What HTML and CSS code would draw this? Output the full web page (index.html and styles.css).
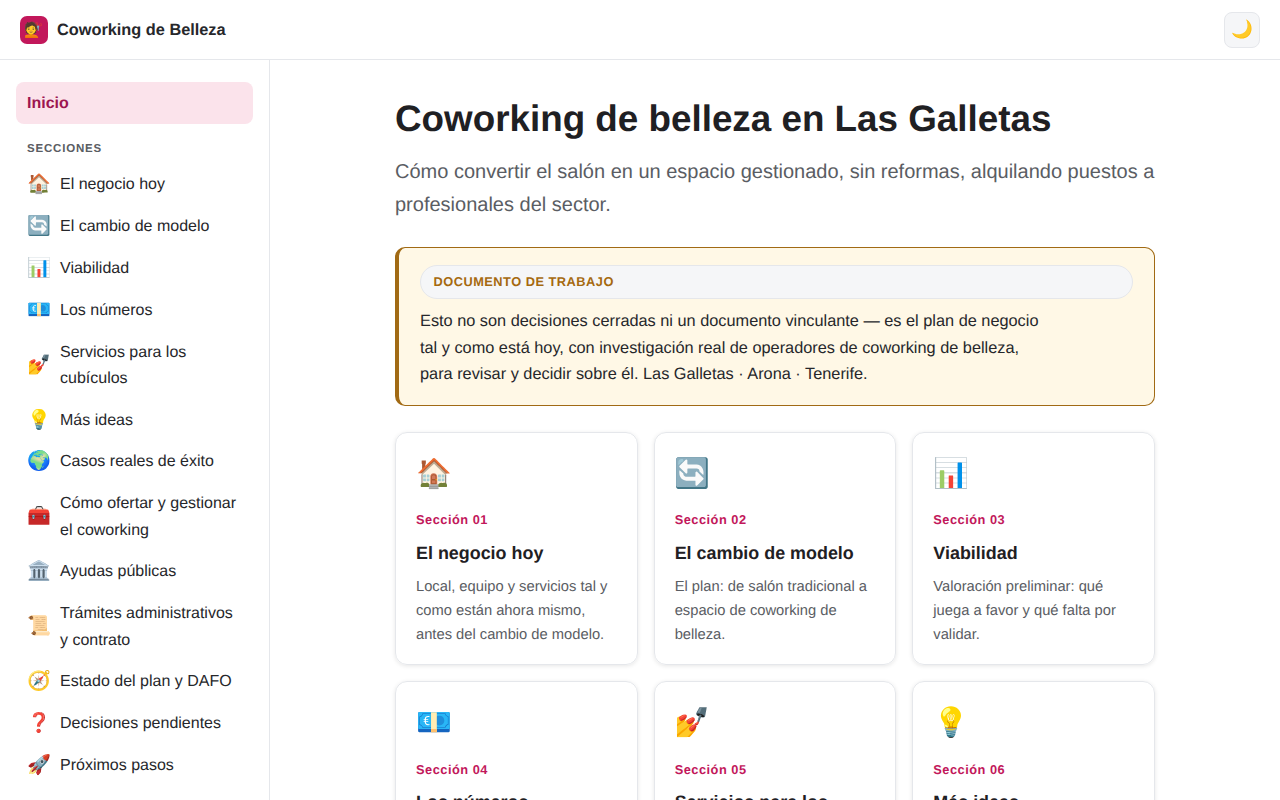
FILE: index.html
```html
<!DOCTYPE html>
<html lang="es">
<head>
    <meta charset="UTF-8">
    <meta name="viewport" content="width=device-width, initial-scale=1.0">
    <title>Coworking de Belleza</title>
    <link rel="stylesheet" href="styles.css">
</head>
<body>
    <!-- Top bar -->
    <header class="topbar">
        <div class="brand">
            <span class="brand-logo">💇</span>
            <span class="brand-name">Coworking de Belleza</span>
        </div>
        <button class="mode-toggle">🌙</button>
    </header>

    <div class="layout">
        <!-- Sidebar -->
        <nav class="sidebar">
            <a class="nav-home" href="#">Inicio</a>
            <div class="nav-label">SECCIONES</div>
            <a class="nav-item" href="#"><span class="nav-icon">🏠</span><span>El negocio hoy</span></a>
            <a class="nav-item" href="#"><span class="nav-icon">🔄</span><span>El cambio de modelo</span></a>
            <a class="nav-item" href="#"><span class="nav-icon">📊</span><span>Viabilidad</span></a>
            <a class="nav-item" href="#"><span class="nav-icon">💶</span><span>Los números</span></a>
            <a class="nav-item" href="#"><span class="nav-icon">💅</span><span>Servicios para los cubículos</span></a>
            <a class="nav-item" href="#"><span class="nav-icon">💡</span><span>Más ideas</span></a>
            <a class="nav-item" href="#"><span class="nav-icon">🌍</span><span>Casos reales de éxito</span></a>
            <a class="nav-item" href="#"><span class="nav-icon">🧰</span><span>Cómo ofertar y gestionar el coworking</span></a>
            <a class="nav-item" href="#"><span class="nav-icon">🏛️</span><span>Ayudas públicas</span></a>
            <a class="nav-item" href="#"><span class="nav-icon">📜</span><span>Trámites administrativos y contrato</span></a>
            <a class="nav-item" href="#"><span class="nav-icon">🧭</span><span>Estado del plan y DAFO</span></a>
            <a class="nav-item" href="#"><span class="nav-icon">❓</span><span>Decisiones pendientes</span></a>
            <a class="nav-item" href="#"><span class="nav-icon">🚀</span><span>Próximos pasos</span></a>
        </nav>

        <!-- Main content -->
        <main class="content">
            <h1>Coworking de belleza en Las Galletas</h1>
            <p class="lead">Cómo convertir el salón en un espacio gestionado, sin reformas, alquilando puestos a profesionales del sector.</p>

            <div class="callout">
                <div class="callout-title">DOCUMENTO DE TRABAJO</div>
                <p>Esto no son decisiones cerradas ni un documento vinculante — es el plan de negocio<br>tal y como está hoy, con investigación real de operadores de coworking de belleza,<br>para revisar y decidir sobre él. Las Galletas · Arona · Tenerife.</p>
            </div>

            <div class="cards">
                <a class="card" href="#">
                    <div class="card-icon">🏠</div>
                    <div class="card-num">Sección 01</div>
                    <h3>El negocio hoy</h3>
                    <p>Local, equipo y servicios tal y como están ahora mismo, antes del cambio de modelo.</p>
                </a>
                <a class="card" href="#">
                    <div class="card-icon">🔄</div>
                    <div class="card-num">Sección 02</div>
                    <h3>El cambio de modelo</h3>
                    <p>El plan: de salón tradicional a espacio de coworking de belleza.</p>
                </a>
                <a class="card" href="#">
                    <div class="card-icon">📊</div>
                    <div class="card-num">Sección 03</div>
                    <h3>Viabilidad</h3>
                    <p>Valoración preliminar: qué juega a favor y qué falta por validar.</p>
                </a>
                <a class="card" href="#">
                    <div class="card-icon">💶</div>
                    <div class="card-num">Sección 04</div>
                    <h3>Los números</h3>
                    <p>Ingresos y gastos del modelo.</p>
                </a>
                <a class="card" href="#">
                    <div class="card-icon">💅</div>
                    <div class="card-num">Sección 05</div>
                    <h3>Servicios para los cubículos</h3>
                    <p>Qué puede ofrecerse en cada puesto.</p>
                </a>
                <a class="card" href="#">
                    <div class="card-icon">💡</div>
                    <div class="card-num">Sección 06</div>
                    <h3>Más ideas</h3>
                    <p>Otras líneas de negocio posibles.</p>
                </a>
            </div>
        </main>
    </div>
</body>
</html>
```

FILE: styles.css
```css
html, body {
    height: 100%;
}
body {
    font-family: "Liberation Sans", Arial, sans-serif;
    text-rendering: geometricPrecision;
    background-color: #fff;
    color: #26272b;
    margin: 0;
    overflow: hidden;
}
a {
    color: inherit;
    text-decoration: none;
}

/* Top bar */
.topbar {
    height: 60px;
    box-sizing: border-box;
    display: flex;
    align-items: center;
    justify-content: space-between;
    padding: 0 20px;
    border-bottom: 1px solid #e5e7eb;
}
.brand {
    display: flex;
    align-items: center;
    gap: 9px;
}
.brand-logo {
    width: 28px;
    height: 28px;
    border-radius: 7px;
    background-color: #c2185b;
    display: flex;
    align-items: center;
    justify-content: center;
    font-size: 15px;
}
.brand-name {
    padding-top: 1px;
    font-size: 16.32px;
    font-weight: 700;
}
.mode-toggle {
    width: 36px;
    height: 36px;
    padding: 0;
    border: 1px solid #e5e7eb;
    border-radius: 8px;
    background-color: #f5f6f8;
    font-size: 17.6px;
    cursor: pointer;
}

/* Layout */
.layout {
    display: flex;
    height: calc(100vh - 60px);
    overflow: hidden;
}

/* Sidebar */
.sidebar {
    width: 270px;
    flex-shrink: 0;
    box-sizing: border-box;
    padding: 22px 16px;
    border-right: 1px solid #e5e7eb;
}
.nav-home {
    display: block;
    height: 42px;
    line-height: 43px;
    padding: 0 11px;
    border-radius: 8px;
    background-color: #fbe3eb;
    color: #9d1550;
    font-weight: 700;
}
.nav-label {
    margin: 18px 11px 8.7px;
    font-size: 11.5px;
    line-height: 14px;
    font-weight: 700;
    letter-spacing: 0.8px;
    color: #5a5d63;
}
.nav-item {
    display: flex;
    align-items: center;
    gap: 11px;
    padding: 7.7px 11px;
    font-size: 16px;
    line-height: 26.4px;
}
.nav-icon {
    width: 22px;
    flex-shrink: 0;
    font-size: 19.2px;
    text-align: center;
}

/* Main content */
.content {
    flex: 1;
    min-width: 0;
    box-sizing: border-box;
    padding: 36px 125px;
}
h1 {
    margin: 0 0 14px;
    font-size: 36.8px;
    line-height: 46px;
    font-weight: 700;
    color: #1f2023;
}
.lead {
    margin: 0 0 25px;
    font-size: 20px;
    line-height: 33px;
    color: #5a5d63;
}
.callout {
    box-sizing: border-box;
    height: 159px;
    padding: 17px 21px;
    border: 1px solid #a16a14;
    border-left-width: 4px;
    border-radius: 10px;
    background-color: #fff8e6;
}
.callout-title {
    height: 34px;
    box-sizing: border-box;
    line-height: 32px;
    padding: 0 12.5px;
    border: 1px solid #e5e7eb;
    border-radius: 17px;
    background-color: #f5f6f8;
    color: #a5690f;
    font-size: 12.8px;
    font-weight: 700;
    letter-spacing: 0.5px;
}
.callout p {
    margin: 9.4px 0 0;
    font-size: 16.32px;
    line-height: 26.4px;
}

/* Cards */
.cards {
    display: grid;
    grid-template-columns: repeat(3, 1fr);
    gap: 16px;
    margin-top: 26px;
}
.card {
    display: block;
    box-sizing: border-box;
    height: 233.4px;
    padding: 20px;
    border: 1px solid #e5e7eb;
    border-radius: 12px;
    box-shadow: 0 1px 4px rgba(0, 0, 0, 0.1);
}
.card-icon {
    font-size: 28.8px;
    line-height: 42px;
    margin-bottom: 15.3px;
}
.card-num {
    font-size: 12.8px;
    line-height: 20px;
    font-weight: 700;
    letter-spacing: 0.5px;
    color: #c2185b;
}
.card h3 {
    margin: 10.7px 0 10px;
    font-size: 17.92px;
    line-height: 24px;
    font-weight: 700;
    color: #1f2023;
}
.card p {
    margin: 0;
    font-size: 14.72px;
    line-height: 24px;
    color: #5a5d63;
}
```
